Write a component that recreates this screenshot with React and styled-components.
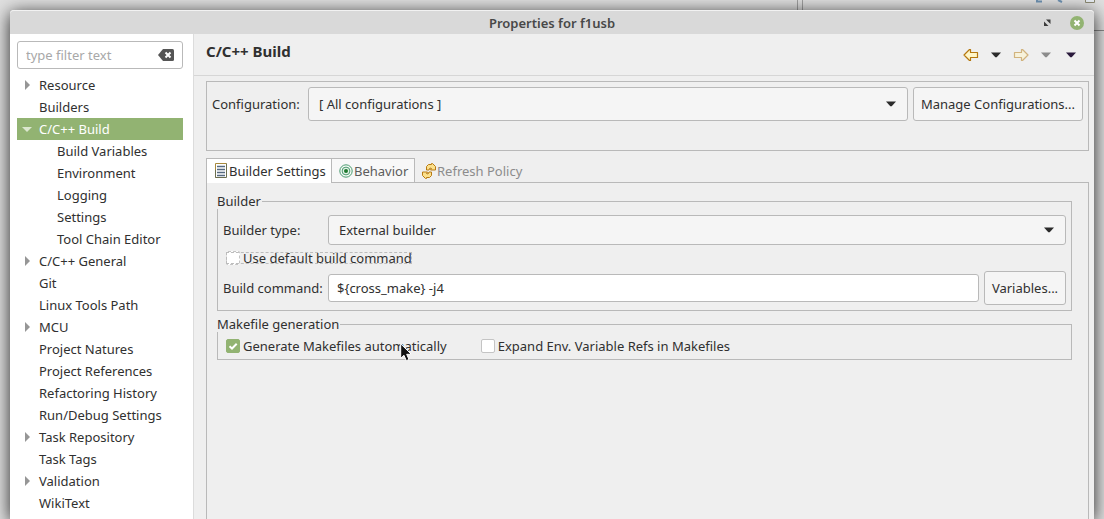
import React, { useState } from 'react';
import styled, { createGlobalStyle, css } from 'styled-components';

const GlobalStyle = createGlobalStyle`
  * {
    box-sizing: border-box;
  }

  body {
    margin: 0;
    background: #e0e0e0;
    color: #303030;
    font: 13px/16px "Noto Sans", "Open Sans", sans-serif;
  }

  button, input, select {
    color: inherit;
    font: inherit;
  }
`;

const Desktop = styled.div`
  position: relative;
  display: flex;
  min-height: 100vh;
  padding: 10px 10px 0;
  overflow: hidden;
`;

const BackWindow = styled.div`
  position: absolute;
  inset: 0 0 auto auto;
  display: flex;
  justify-content: flex-end;
  width: 307px;
  height: 31px;
  border-bottom: 1px solid #8a8a8a;
  border-left: 1px solid #a0a0a0;

  &::before {
    content: "";
    width: 1px;
    margin: 0 auto 0 4px;
    background: #a0a0a0;
  }
`;

const Dialog = styled.div`
  position: relative;
  display: flex;
  flex: 1;
  flex-direction: column;
  min-width: 0;
  border-radius: 4px 4px 0 0;
  background: #efefef;
  box-shadow: 0 3px 18px rgba(0, 0, 0, 0.85);
`;

const TitleBar = styled.header`
  display: grid;
  grid-template-columns: 1fr auto 1fr;
  align-items: center;
  height: 24px;
  padding: 0 10px;
  border-top: 1px solid #f2f2f2;
  border-radius: 4px 4px 0 0;
  background: #d9d9d9;
`;

const WindowTitle = styled.h1`
  grid-column: 2;
  margin: 0;
  color: #484848;
  font-size: 13px;
  font-weight: 600;
`;

const WindowButtons = styled.div`
  display: flex;
  justify-content: flex-end;
  gap: 16px;
`;

const IconButton = styled.button`
  display: flex;
  align-items: center;
  justify-content: center;
  height: 16px;
  padding: 0;
  border: 0;
  background: none;
`;

const Body = styled.div`
  display: flex;
  flex: 1;
`;

const Sidebar = styled.nav`
  width: 184px;
  padding: 7px 10px 0 7px;
  border-right: 1px solid #dcdcdc;
  background: #fff;
`;

const inputFrame = css`
  border: 1px solid #b9b9b9;
  border-radius: 3px;
`;

const Search = styled.div`
  ${inputFrame}
  display: flex;
  align-items: center;
  height: 28px;
  margin-bottom: 5px;
  padding: 0 8px;
`;

const SearchInput = styled.input`
  flex: 1;
  min-width: 0;
  padding: 0;
  border: 0;
  outline: 0;
  background: none;

  &::placeholder {
    color: #a8a8a8;
    opacity: 1;
  }
`;

const Tree = styled.ul`
  margin: 0;
  padding: 0;
  list-style: none;
`;

const TreeRow = styled.li`
  display: flex;
  align-items: center;
  height: 22px;
  padding-left: ${p => (p.$nested ? 23 : 5)}px;
  background: ${p => (p.$selected ? '#92b372' : 'none')};
  color: ${p => (p.$selected ? '#fff' : 'inherit')};
  white-space: nowrap;
`;

const Twisty = styled.span`
  display: flex;
  width: 17px;
`;

const Main = styled.main`
  display: flex;
  flex: 1;
  flex-direction: column;
  min-width: 0;
`;

const PageHeader = styled.div`
  display: flex;
  justify-content: space-between;
  height: 42px;
  padding: 7px 18px 0 12px;
  border-bottom: 1px solid #d6d6d6;
`;

const PageTitle = styled.h2`
  margin: 0;
  font-size: 15px;
  font-weight: 700;
  line-height: 20px;
`;

const Toolbar = styled.div`
  display: flex;
  gap: 15px;
  padding-top: 6px;
`;

const History = styled.div`
  display: flex;
  gap: 12px;
`;

const Content = styled.div`
  display: flex;
  flex: 1;
  flex-direction: column;
  padding: 5px 5px 0 12px;
`;

const ConfigBox = styled.div`
  height: 70px;
  margin-bottom: 7px;
  padding: 5px;
  border: 1px solid #b9b9b9;
`;

const FormRow = styled.div`
  display: grid;
  grid-template-columns: ${p => p.$label}px 1fr auto;
  column-gap: 5px;
  align-items: center;
`;

const SelectWrap = styled.div`
  position: relative;
  grid-column: ${p => (p.$wide ? 'span 2' : 'auto')};

  svg {
    position: absolute;
    top: calc(50% - 3px);
    right: 12px;
    pointer-events: none;
  }
`;

const Select = styled.select`
  ${inputFrame}
  display: block;
  width: 100%;
  height: ${p => p.$height}px;
  padding: 0 10px;
  appearance: none;
  background: #f5f5f5;
`;

const PushButton = styled.button`
  ${inputFrame}
  width: ${p => p.$width}px;
  height: 34px;
  padding: 0;
  background: #f5f5f5;
  white-space: nowrap;
`;

const TextInput = styled.input`
  ${inputFrame}
  width: 100%;
  height: 28px;
  padding: 0 8px;
  background: #fff;
`;

const TabList = styled.div`
  display: flex;
  height: 24px;
`;

const Tab = styled.button`
  display: flex;
  align-items: center;
  gap: 1px;
  height: ${p => (p.$active ? 25 : 24)}px;
  width: ${p => p.$width}px;
  padding: 0 0 0 7px;
  border: 1px solid ${p => (p.$flat ? 'transparent' : '#b9b9b9')};
  border-bottom: 0;
  border-left-width: ${p => (p.$active ? 1 : 0)}px;
  background: ${p => (p.$active ? '#fff' : p.$flat ? 'none' : '#f8f8f8')};
  color: ${p => (p.$active ? '#303030' : p.$flat ? '#8c8c8c' : '#5c5c5c')};
  white-space: nowrap;
  z-index: 1;
`;

const TabPanel = styled.section`
  display: flex;
  flex: 1;
  flex-direction: column;
  gap: 5px;
  padding: 10px 16px 0 10px;
  border: 1px solid #b9b9b9;
  border-bottom: 0;
`;

const Group = styled.fieldset`
  min-width: 0;
  margin: 0;
  padding: ${p => (p.$tight ? '0 5px' : '6px 5px 5px')};
  border: 1px solid #b9b9b9;
`;

const Legend = styled.legend`
  margin-left: -6px;
  padding: 0 1px 0 0;
  background: #efefef;
`;

const CheckRow = styled.div`
  display: flex;
  align-items: center;
  gap: 34px;
  height: ${p => p.$height}px;
  padding-left: 3px;
`;

const CheckLabel = styled.label`
  position: relative;
  display: flex;
  align-items: center;
  gap: 3px;
  height: 12px;
  outline: ${p => (p.$focused ? '1px dashed #bcbcbc' : 'none')};
  outline-offset: -1px;
  white-space: nowrap;
`;

const CheckInput = styled.input`
  width: 14px;
  height: 14px;
  margin: 0;
  border: 1px ${p => (p.$dashed ? 'dashed' : 'solid')} #c4c4c4;
  border-radius: 2px;
  appearance: none;
  background: #fff;

  &:checked {
    border-color: #92b372;
    background: #92b372 url("data:image/svg+xml,%3Csvg xmlns='http://www.w3.org/2000/svg' viewBox='0 0 12 12'%3E%3Cpath d='M2.5 6.2 5 8.5 9.7 3.8' fill='none' stroke='white' stroke-width='2'/%3E%3C/svg%3E");
  }
`;

const Pointer = styled.svg`
  position: absolute;
  top: 3px;
  left: 174px;
  pointer-events: none;
`;

const Caret = ({ color = '#2b2b2b' }) => (
  <svg width="10" height="6" viewBox="0 0 10 6" aria-hidden="true">
    <path d="M0 .5h10L5.7 5.3H4.3z" fill={color} />
  </svg>
);

const Arrow = ({ forward }) => (
  <svg width="16" height="16" viewBox="0 0 16 16" opacity={forward ? 0.5 : 1} aria-hidden="true">
    <path
      d="M1 8 6.5 2.5H7.5V5.5H14.5V10.5H7.5V13.5H6.5Z"
      transform={forward ? 'matrix(-1 0 0 1 16 0)' : undefined}
      fill="#fff6c8"
      stroke="#b5780f"
      strokeWidth="1.2"
      strokeLinejoin="round"
    />
  </svg>
);

const ClearIcon = () => (
  <svg width="16" height="12" viewBox="0 0 16 12" aria-hidden="true">
    <path d="M5 0h9.5Q16 0 16 1.5v9q0 1.5-1.5 1.5H5L0 6z" fill="#555" />
    <path d="m7.5 3.5 5 5m0-5-5 5" stroke="#fff" strokeWidth="2" />
  </svg>
);

const ListIcon = () => (
  <svg width="14" height="16" viewBox="0 0 14 16" aria-hidden="true">
    <path d="M1.5.5h11v14h-11z" fill="#fff" />
    <path d="M3 3.5h8M3 6.5h8M3 9.5h8M3 12.5h8" stroke="#566a80" strokeWidth="1.6" />
    <path d="M1.5 14.500V.5h11" fill="none" stroke="#a88a3c" />
    <path d="M1.500 7v7.5h11V.5" fill="none" stroke="#6c6f50" />
  </svg>
);

const TargetIcon = () => (
  <svg width="14" height="14" viewBox="0 0 14 14" aria-hidden="true">
    <circle cx="7" cy="7" r="6.2" fill="#f4faf4" stroke="#4a9a70" />
    <circle cx="7" cy="7" r="3.9" fill="#e4f2e6" stroke="#4a9a70" />
    <circle cx="7" cy="7" r="2" fill="#1f7a30" />
  </svg>
);

const RefreshIcon = () => (
  <svg width="14" height="16" viewBox="0 0 14 16" aria-hidden="true">
    <g fill="#fbe08c" stroke="#b87a12" strokeLinejoin="round">
      <path d="M4.5 7V3.500L6.5 1.5H9.500V.5L10.500.5 13.5 3.500V7H8.500L9.500 5.500 8 5 7 7z" />
      <path d="M9.5 9V12.500L7.5 14.5H4.500V15.500H3.500L.5 12.500V9H5.500L4.500 10.500 6 11 7 9z" />
    </g>
  </svg>
);

const TreeArrow = ({ open }) => (
  <svg width="10" height="10" viewBox="0 0 10 10" aria-hidden="true">
    {open ? <path d="M0 3h10L5 8z" fill="#dbe7cf" /> : <path d="M3 0v10l5-5z" fill="#969696" />}
  </svg>
);

const TREE = [
  { name: 'Resource', branch: true },
  { name: 'Builders' },
  { name: 'C/C++ Build', branch: true, open: true },
  { name: 'Build Variables', nested: true },
  { name: 'Environment', nested: true },
  { name: 'Logging', nested: true },
  { name: 'Settings', nested: true },
  { name: 'Tool Chain Editor', nested: true },
  { name: 'C/C++ General', branch: true },
  { name: 'Git' },
  { name: 'Linux Tools Path' },
  { name: 'MCU', branch: true },
  { name: 'Project Natures' },
  { name: 'Project References' },
  { name: 'Refactoring History' },
  { name: 'Run/Debug Settings' },
  { name: 'Task Repository', branch: true },
  { name: 'Task Tags' },
  { name: 'Validation', branch: true },
  { name: 'WikiText' },
];

export default function App() {
  const [selected, setSelected] = useState('C/C++ Build');

  return (
    <Desktop>
      <GlobalStyle />
      <BackWindow>
        <svg width="70" height="4" viewBox="0 0 70 4" aria-hidden="true">
          <path d="M3 0v1.5h5M24 0l4 2" fill="none" stroke="#6f93b3" strokeWidth="2" />
          <path d="M51.5-6h9v8.5h-9z" fill="#e8eef4" stroke="#8d8a72" />
        </svg>
      </BackWindow>
      <Dialog role="dialog" aria-labelledby="window-title">
        <TitleBar>
          <WindowTitle id="window-title">Properties for f1usb</WindowTitle>
          <WindowButtons>
            <IconButton aria-label="Restore">
              <svg width="14" height="14" viewBox="0 0 14 14" aria-hidden="true">
                <path d="M6 3.5h4.500V8zM4 5.500V10h4.500z" fill="#3c3c3c" />
              </svg>
            </IconButton>
            <IconButton aria-label="Close">
              <svg width="14" height="14" viewBox="0 0 14 14" aria-hidden="true">
                <circle cx="7" cy="7" r="7" fill="#92b372" />
                <path d="m4.5 4.5 5 5m0-5-5 5" stroke="#fff" strokeWidth="2" />
              </svg>
            </IconButton>
          </WindowButtons>
        </TitleBar>

        <Body>
          <Sidebar>
            <Search>
              <SearchInput aria-label="Filter" placeholder="type filter text" />
              <IconButton aria-label="Clear">
                <ClearIcon />
              </IconButton>
            </Search>
            <Tree>
              {TREE.map(item => (
                <TreeRow
                  key={item.name}
                  $nested={item.nested}
                  $selected={item.name === selected}
                  onClick={() => setSelected(item.name)}
                >
                  <Twisty>{item.branch && <TreeArrow open={item.open} />}</Twisty>
                  {item.name}
                </TreeRow>
              ))}
            </Tree>
          </Sidebar>

          <Main>
            <PageHeader>
              <PageTitle>C/C++ Build</PageTitle>
              <Toolbar>
                <History>
                  <IconButton aria-label="Back"><Arrow /></IconButton>
                  <IconButton aria-label="Back history"><Caret /></IconButton>
                  <IconButton aria-label="Forward"><Arrow forward /></IconButton>
                  <IconButton aria-label="Forward history"><Caret color="#8c8c8c" /></IconButton>
                </History>
                <IconButton aria-label="View menu"><Caret color="#2a1a3c" /></IconButton>
              </Toolbar>
            </PageHeader>

            <Content>
              <ConfigBox>
                <FormRow $label={91}>
                  <label htmlFor="configuration">Configuration:</label>
                  <SelectWrap>
                    <Select id="configuration" $height={34}>
                      <option>[ All configurations ]</option>
                    </Select>
                    <Caret />
                  </SelectWrap>
                  <PushButton $width={170}>Manage Configurations...</PushButton>
                </FormRow>
              </ConfigBox>

              <TabList role="tablist">
                <Tab role="tab" aria-selected="true" $active $width={126}>
                  <ListIcon />
                  Builder Settings
                </Tab>
                <Tab role="tab" $width={83}>
                  <TargetIcon />
                  Behavior
                </Tab>
                <Tab role="tab" $flat>
                  <RefreshIcon />
                  Refresh Policy
                </Tab>
              </TabList>

              <TabPanel role="tabpanel">
                <Group>
                  <Legend>Builder</Legend>
                  <FormRow $label={100}>
                    <label htmlFor="builder-type">Builder type:</label>
                    <SelectWrap $wide>
                      <Select id="builder-type" $height={30}>
                        <option>External builder</option>
                      </Select>
                      <Caret />
                    </SelectWrap>
                  </FormRow>
                  <CheckRow $height={26}>
                    <CheckLabel $focused>
                      <CheckInput type="checkbox" $dashed />
                      Use default build command
                    </CheckLabel>
                  </CheckRow>
                  <FormRow $label={100}>
                    <label htmlFor="build-command">Build command:</label>
                    <TextInput id="build-command" defaultValue="${cross_make} -j4" />
                    <PushButton $width={82}>Variables...</PushButton>
                  </FormRow>
                </Group>

                <Group $tight>
                  <Legend>Makefile generation</Legend>
                  <CheckRow $height={27}>
                    <CheckLabel>
                      <CheckInput type="checkbox" defaultChecked />
                      Generate Makefiles automatically
                      <Pointer width="13" height="19" viewBox="0 0 13 19" aria-hidden="true">
                        <path
                          d="M.7.8v14.5l3.3-3 2.3 5.4 2.7-1.2-2.3-5.2h4.600z"
                          fill="#111"
                          stroke="#fff"
                        />
                      </Pointer>
                    </CheckLabel>
                    <CheckLabel>
                      <CheckInput type="checkbox" />
                      Expand Env. Variable Refs in Makefiles
                    </CheckLabel>
                  </CheckRow>
                </Group>
              </TabPanel>
            </Content>
          </Main>
        </Body>
      </Dialog>
    </Desktop>
  );
}
